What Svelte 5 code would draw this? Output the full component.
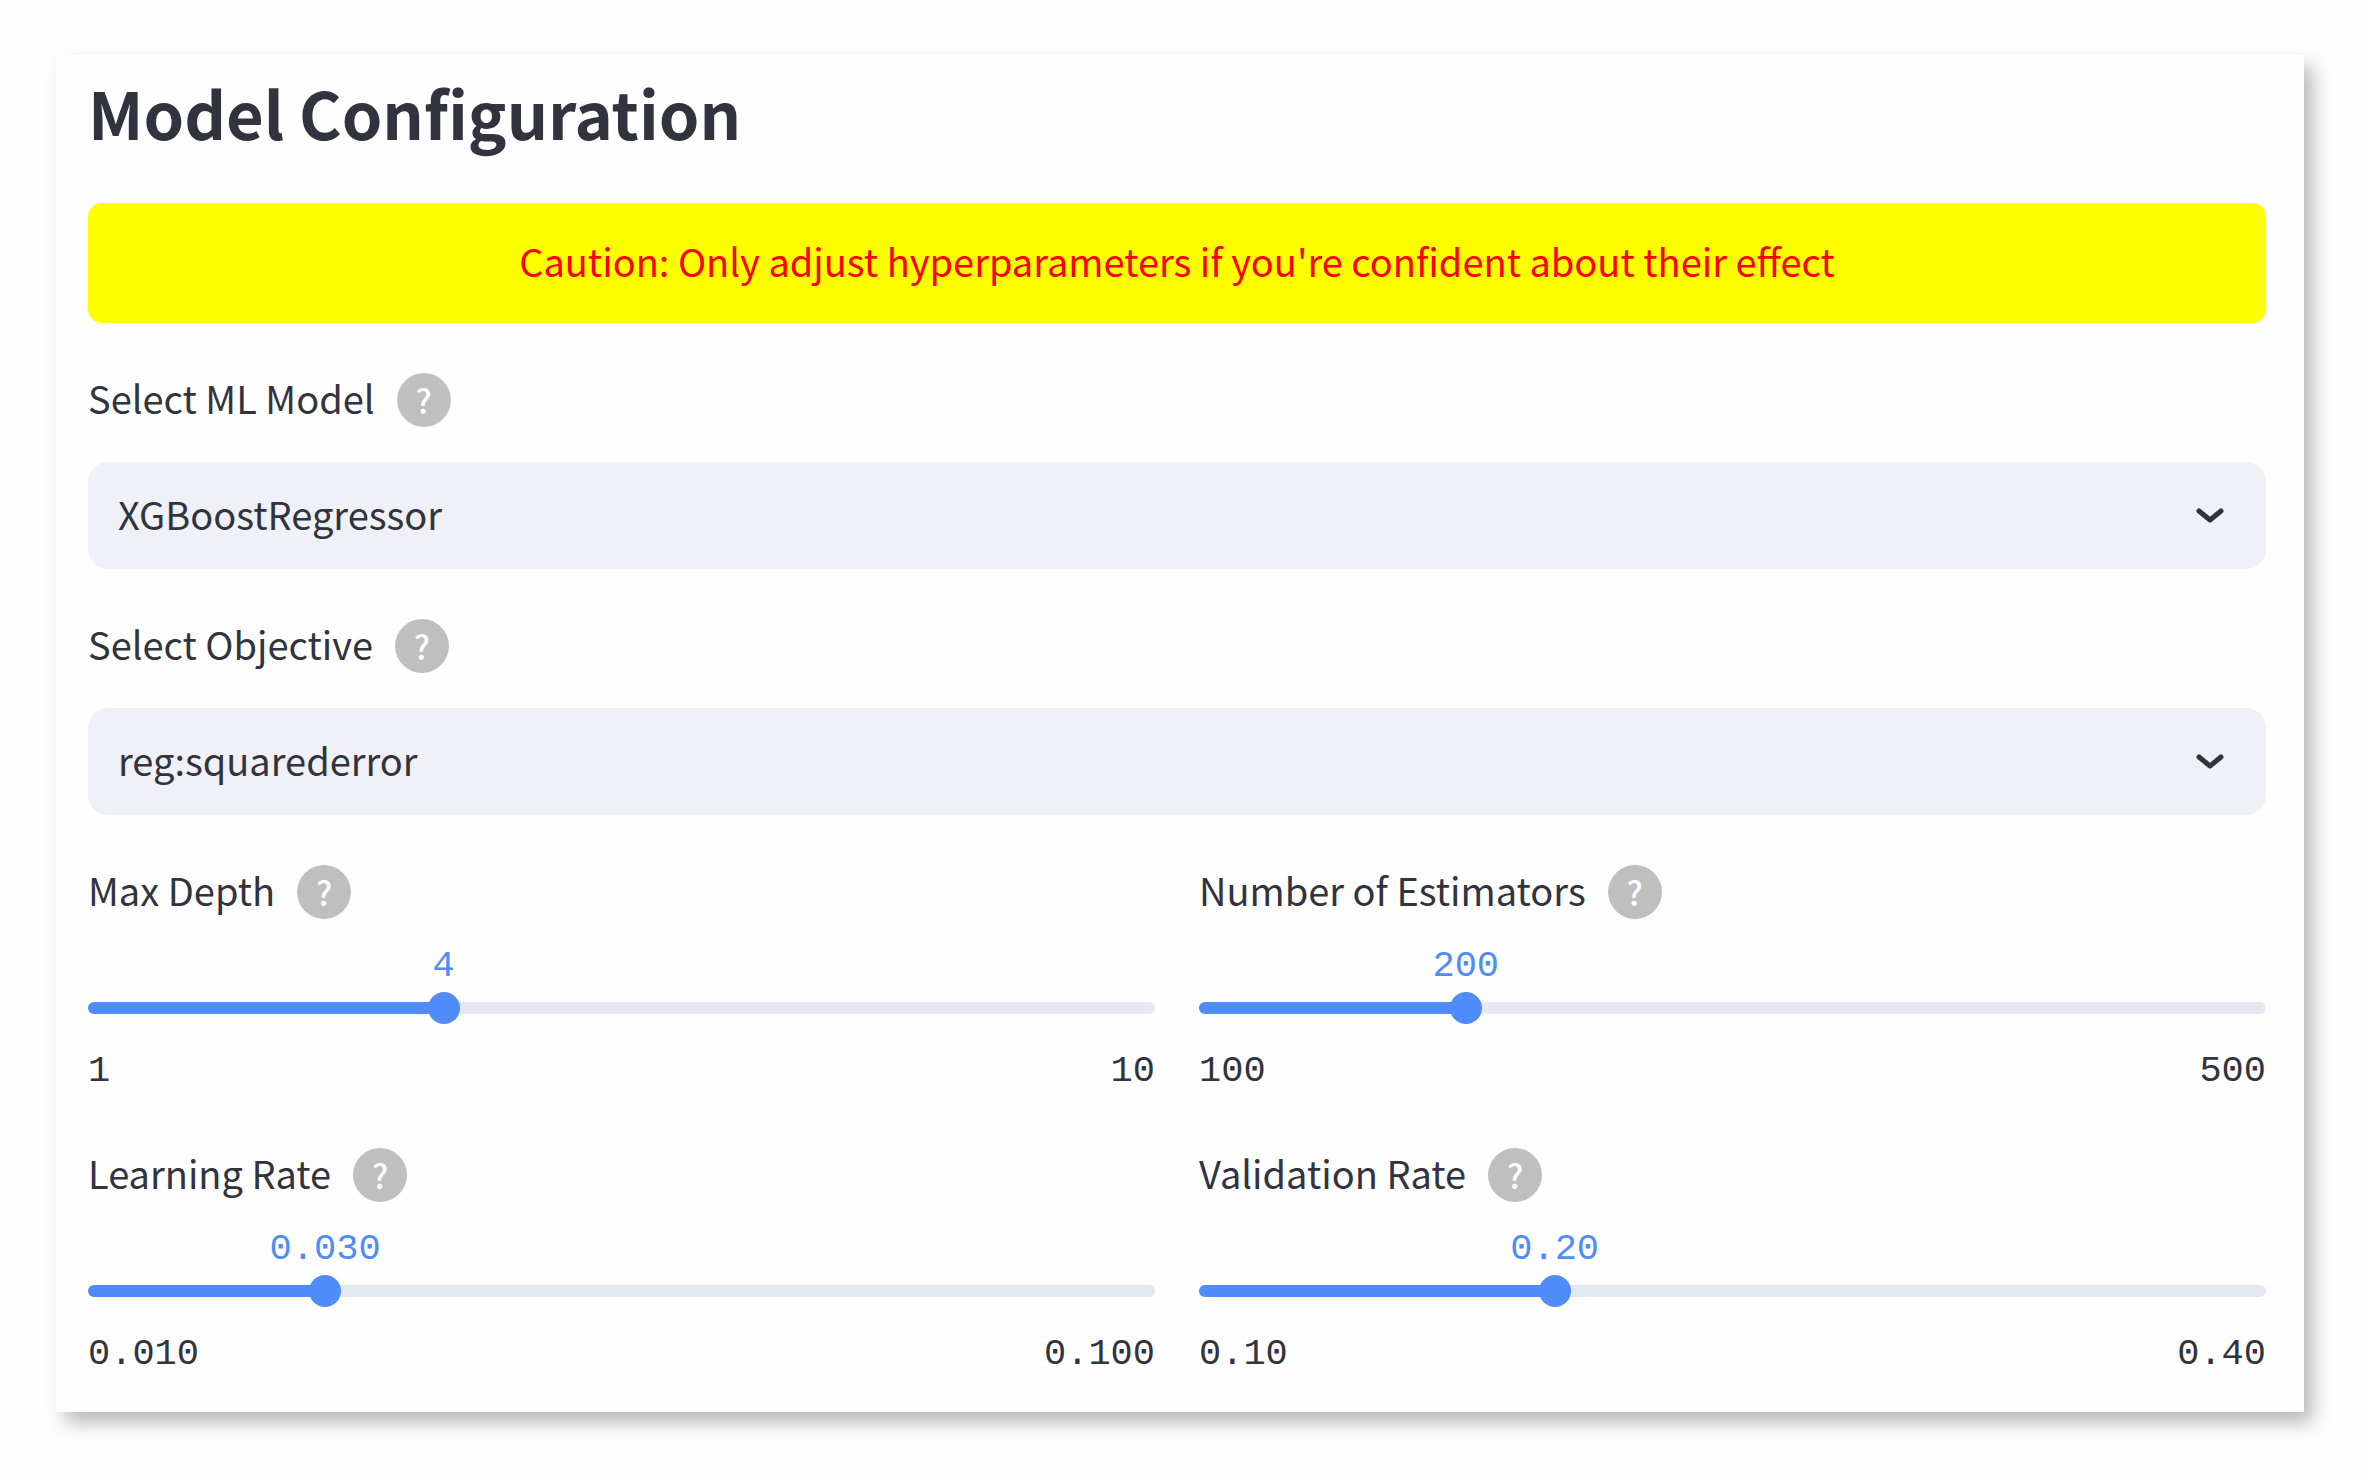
<script>
  let selects = $state([
    { id: 'model', label: 'Select ML Model', value: 'XGBoostRegressor', options: ['XGBoostRegressor'] },
    { id: 'objective', label: 'Select Objective', value: 'reg:squarederror', options: ['reg:squarederror'] },
  ]);

  let sliders = $state([
    { id: 'depth', label: 'Max Depth', min: 1, max: 10, step: 1, digits: 0, value: 4 },
    { id: 'estimators', label: 'Number of Estimators', min: 100, max: 500, step: 10, digits: 0, value: 200 },
    { id: 'learning', label: 'Learning Rate', min: 0.01, max: 0.1, step: 0.005, digits: 3, value: 0.03 },
    { id: 'validation', label: 'Validation Rate', min: 0.1, max: 0.4, step: 0.01, digits: 2, value: 0.2 },
  ]);

  const percent = (s) => ((s.value - s.min) / (s.max - s.min)) * 100;
</script>

{#snippet fieldLabel(id, text)}
  <div class="label-row">
    <label for={id}>{text}</label>
    <button class="help" type="button" aria-label={`Help: ${text}`}>?</button>
  </div>
{/snippet}

<main class="card">
  <h1>Model Configuration</h1>
  <p class="banner">Caution: Only adjust hyperparameters if you're confident about their effect</p>

  {#each selects as field (field.id)}
    <div class="field">
      {@render fieldLabel(field.id, field.label)}
      <div class="select-box">
        <select id={field.id} bind:value={field.value}>
          {#each field.options as option}
            <option value={option}>{option}</option>
          {/each}
        </select>
        <svg class="chevron" viewBox="0 0 28 16" aria-hidden="true">
          <path d="M3 3 L14 12 L25 3" />
        </svg>
      </div>
    </div>
  {/each}

  <div class="sliders">
    {#each sliders as s (s.id)}
      <div class="slider">
        {@render fieldLabel(s.id, s.label)}
        <div class="value-line">
          <output for={s.id} style:left={`${percent(s)}%`}>{s.value.toFixed(s.digits)}</output>
        </div>
        <div class="range">
          <div class="track"><div class="fill" style:width={`${percent(s)}%`}></div></div>
          <input id={s.id} type="range" min={s.min} max={s.max} step={s.step} bind:value={s.value} />
        </div>
        <div class="limits">
          <span>{s.min.toFixed(s.digits)}</span>
          <span>{s.max.toFixed(s.digits)}</span>
        </div>
      </div>
    {/each}
  </div>
</main>

<style>
  :global(body) {
    background: #fefefe;
  }

  .card {
    box-sizing: border-box;
    margin: 55px 64px 68px 56px;
    padding: 0 38px 36px 32px;
    background: #fefefe;
    box-shadow: 9px 11px 18px rgba(0, 0, 0, 0.27);
    color: #31333f;
    font-family: 'Noto Sans CJK JP', 'Noto Sans', sans-serif;
    font-size: 38px;
    line-height: 54px;
  }

  h1 {
    margin: 0 0 34px;
    font-size: 65px;
    font-weight: 700;
    line-height: 114px;
  }

  .banner {
    margin: 0;
    padding: 31px 32px 35px;
    border-radius: 14px;
    background: #ffff00;
    color: #ff0000;
    text-align: center;
  }

  .field {
    margin-top: 50px;
  }

  .label-row {
    display: flex;
    align-items: center;
    gap: 22px;
  }

  label {
    padding-bottom: 4px;
    line-height: 50px;
  }

  .help {
    width: 54px;
    height: 54px;
    padding: 0;
    border: 0;
    border-radius: 50%;
    background: #bfbfbf;
    color: #fefefe;
    font-family: inherit;
    font-size: 33px;
    font-weight: 500;
    line-height: 50px;
  }

  .select-box {
    display: grid;
    align-items: center;
    margin-top: 35px;
  }

  .select-box > * {
    grid-area: 1 / 1;
  }

  select {
    width: 100%;
    height: 107px;
    padding: 0 100px 4px 30px;
    border: 0;
    border-radius: 20px;
    appearance: none;
    background: #f0f1f6;
    color: inherit;
    font: inherit;
  }

  .chevron {
    justify-self: end;
    width: 28px;
    height: 16px;
    margin-right: 42px;
    fill: none;
    stroke: #31333f;
    stroke-width: 5;
    stroke-linecap: round;
    stroke-linejoin: round;
    pointer-events: none;
  }

  .sliders {
    display: grid;
    grid-template-columns: 1fr 1fr;
    gap: 55px 44px;
    margin-top: 50px;
  }

  .value-line,
  .limits {
    font-family: 'Liberation Mono', monospace;
    font-size: 37px;
    line-height: 44px;
  }

  .value-line {
    position: relative;
    height: 44px;
    margin: 25px 0 4px;
    color: #4f8cf9;
  }

  output {
    position: absolute;
    transform: translateX(-50%);
  }

  .limits {
    display: flex;
    justify-content: space-between;
    margin-top: 25px;
  }

  .range {
    display: grid;
    align-items: center;
    height: 32px;
  }

  .range > * {
    grid-area: 1 / 1;
  }

  .track {
    height: 12px;
    border-radius: 6px;
    overflow: hidden;
    background: #e4e8f1;
  }

  .fill {
    height: 100%;
    background: #4f8cf9;
  }

  input {
    height: 32px;
    margin: 0 -16px;
    appearance: none;
    background: transparent;
  }

  input::-webkit-slider-thumb {
    width: 32px;
    height: 32px;
    border-radius: 50%;
    appearance: none;
    background: #4f8cf9;
  }
</style>
